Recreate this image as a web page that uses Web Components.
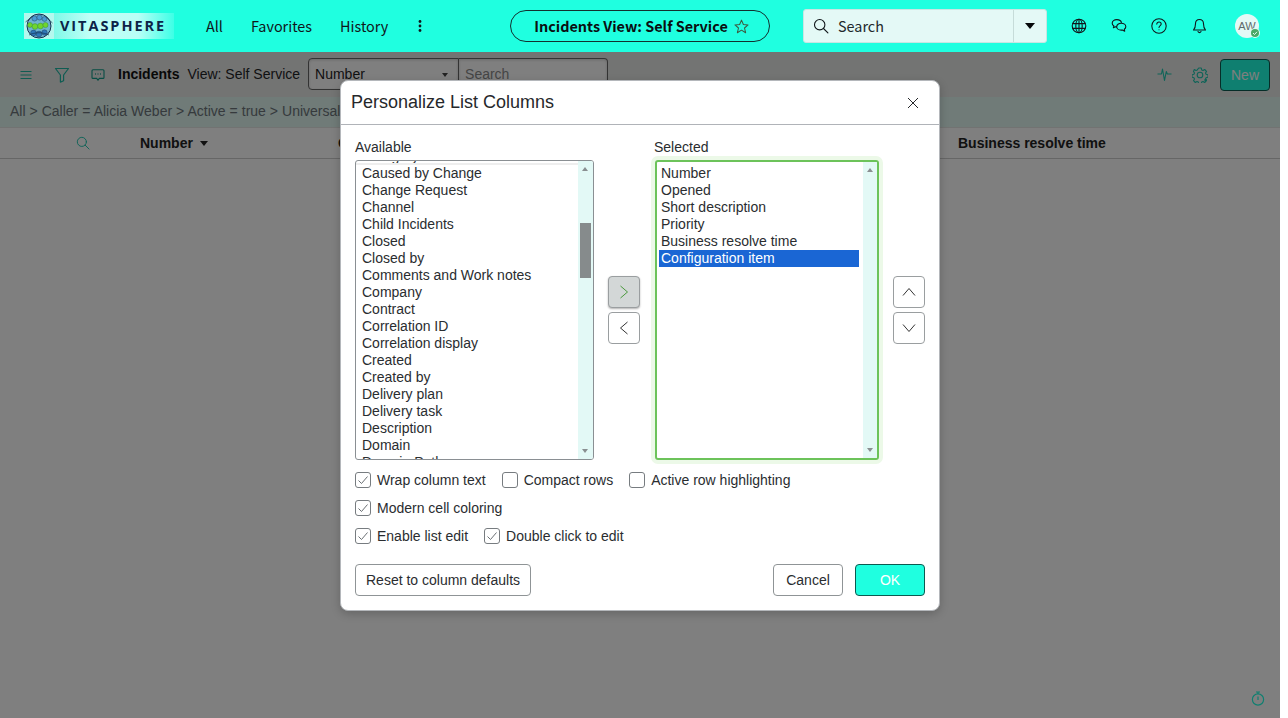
<!DOCTYPE html>
<html lang="en">
<head>
<meta charset="utf-8">
<title>Incidents View: Self Service</title>
<style>
html, body { margin: 0; height: 100%; background: #fff; overflow: hidden; }
body { font-family: "Liberation Sans", Arial, sans-serif; font-size: 14px; color: #2e2e2e; }
</style>
</head>
<body>
<app-shell></app-shell>

<script>
const icons = {
  globe: `<svg width="16" height="16" viewBox="0 0 16 16" fill="none" stroke="currentColor" stroke-width="1.1"><circle cx="8" cy="8" r="6.8"/><ellipse cx="8" cy="8" rx="3.2" ry="6.8"/><path d="M1.6 5.6h12.8M1.6 10.4h12.8M8 1.2v13.6"/></svg>`,
  chat: `<svg width="16" height="16" viewBox="0 0 16 16" fill="none" stroke="currentColor" stroke-width="1.1" stroke-linejoin="round"><path d="M6 8.900c-.5 0-1-.1-1.500-.2l-2.100 1 .5-1.700c-1-.7-1.700-1.700-1.700-2.800 0-2 2-3.600 4.600-3.600 2.400 0 4.400 1.300 4.700 3.200"/><path d="M10.200 5.300c2.500 0 4.600 1.500 4.600 3.400 0 1-.6 1.900-1.500 2.500l.4 2-2.300-1.200c-.4.1-.8.1-1.200.1-2.500 0-4.500-1.500-4.500-3.400s2-3.400 4.500-3.400z"/></svg>`,
  help: `<svg width="16" height="16" viewBox="0 0 16 16" fill="none" stroke="currentColor" stroke-width="1.05" stroke-linecap="round"><circle cx="8" cy="8" r="7.2"/><path d="M5.800 6.100c0-1.300 1-2.100 2.200-2.100s2.200.8 2.200 2c0 1.500-2.200 1.700-2.200 3.500"/><circle cx="8" cy="11.700" r=".5" fill="currentColor" stroke="none"/></svg>`,
  bell: `<svg width="15" height="16" viewBox="0 0 15 16" fill="none" stroke="currentColor" stroke-width="1.1" stroke-linejoin="round"><path d="M7.500 1.500c-2.400 0-4 1.800-4 4.200 0 3.300-.7 4.800-2 6.300h12c-1.300-1.500-2-3-2-6.300 0-2.400-1.600-4.200-4-4.200z"/><path d="M5.800 13.200c.2.900.9 1.400 1.700 1.400s1.500-.5 1.700-1.400"/></svg>`,
  search: `<svg width="16" height="16" viewBox="0 0 16 16" fill="none" stroke="currentColor" stroke-width="1.1" stroke-linecap="round"><circle cx="6.700" cy="6.700" r="5.200"/><path d="M10.500 10.500l4.400 4.400"/></svg>`,
  star: `<svg width="15" height="15" viewBox="0 0 16 16" fill="none" stroke="currentColor" stroke-width="1.100" stroke-linejoin="round"><path d="M8 1.200l2 4.700 5 .4-3.800 3.300 1.200 5L8 11.900l-4.400 2.700 1.200-5L1 6.300l5-.4z"/></svg>`,
  menu: `<svg width="14" height="14" viewBox="0 0 14 14" fill="none" stroke="currentColor" stroke-width="1.1"><path d="M1.500 3.500h11M1.500 7h11M1.500 10.500h11"/></svg>`,
  filter: `<svg width="16" height="16" viewBox="0 0 16 16" fill="none" stroke="currentColor" stroke-width="1.2" stroke-linejoin="round"><path d="M1.500 1.500h13L9.600 8v5.800l-3.200 1.300V8z"/></svg>`,
  comment: `<svg width="14" height="14" viewBox="0 0 14 14" fill="none" stroke="currentColor" stroke-width="1.100" stroke-linejoin="round"><path d="M2 1.800h10c.6 0 1 .4 1 1v6.600c0 .6-.4 1-1 1H8.300L7 12.300l-1.300-1.900H2c-.6 0-1-.4-1-1V2.800c0-.6.4-1 1-1z"/><path d="M4 6h.8M6.600 6h.8M9.200 6h.8" stroke-width="1.500"/></svg>`,
  pulse: `<svg width="15" height="15" viewBox="0 0 15 15" fill="none" stroke="currentColor" stroke-width="1.100" stroke-linejoin="round"><path d="M.5 7h4l1-5 2 11.500 1.800-9 1 2.500h4.200"/></svg>`,
  gear: `<svg width="16" height="16" viewBox="0 0 16 16" fill="none" stroke="currentColor" stroke-width="1.100" stroke-linejoin="round"><circle cx="8" cy="8" r="2.800"/><path d="M6.700 1h2.600l.4 1.900 1.300.6 1.700-1 1.800 1.900-1 1.600.6 1.300 1.900.5v2.400l-1.900.5-.6 1.300 1 1.700-1.800 1.800-1.700-1-1.300.6-.4 1.900H6.700l-.4-1.900-1.300-.6-1.700 1-1.800-1.800 1-1.700-.6-1.300-1.900-.5V7.800l1.900-.5.6-1.300-1-1.600L2.300 2.500l1.700 1 1.300-.6z"/><circle cx="13.600" cy="13" r="1.300" fill="currentColor" stroke="none"/></svg>`,
  stopwatch: `<svg width="14" height="15" viewBox="0 0 14 15" fill="none" stroke="currentColor" stroke-width="1.200"><circle cx="7" cy="8.500" r="5.600"/><path d="M5 1h4M7 1v2M7 5.500v3.500"/></svg>`,
  close: `<svg width="12" height="12" viewBox="0 0 12 12" fill="none" stroke="currentColor" stroke-width="1"><path d="M1 1l10 10M11 1L1 11"/></svg>`,
  right: `<svg width="16" height="16" viewBox="0 0 16 16" fill="none" stroke="currentColor" stroke-width="1"><path d="M4.500 2l7 6-7 6"/></svg>`,
  left: `<svg width="16" height="16" viewBox="0 0 16 16" fill="none" stroke="currentColor" stroke-width="1"><path d="M11.500 2l-7 6 7 6"/></svg>`,
  up: `<svg width="16" height="16" viewBox="0 0 16 16" fill="none" stroke="currentColor" stroke-width="1"><path d="M2 11.500l6-7 6 7"/></svg>`,
  down: `<svg width="16" height="16" viewBox="0 0 16 16" fill="none" stroke="currentColor" stroke-width="1"><path d="M2 4.500l6 7 6-7"/></svg>`
};

class BrandLogo extends HTMLElement {
  constructor() {
    super();
    this.attachShadow({ mode: "open" }).innerHTML = `
<style>
:host { display: flex; width: 150px; height: 26px; }
.globe { width: 30px; height: 26px; background: #b4f8ee; display: flex; }
.word {
  flex: 1; padding-left: 6px; display: flex; align-items: center;
  background: linear-gradient(90deg, #7ff9e8 0%, #c0fff7 30%, #b8fff6 70%, #3dffe6 100%);
  font: 700 14.500px/1 "Open Sans", sans-serif; letter-spacing: 1.950px; color: #0c2348;
}
</style>
<div class="globe">
  <svg width="30" height="26" viewBox="0 0 30 26">
    <circle cx="15" cy="13" r="12" fill="#6fb4cf" stroke="#16304f" stroke-width="1"/>
    <g fill="#4a9ad4" stroke="#16304f" stroke-width=".4"><circle cx="10.500" cy="5.500" r="2.600"/><circle cx="15.500" cy="4.500" r="2.600"/><circle cx="20.500" cy="6" r="2.400"/></g>
    <g fill="#2f78b8" stroke="#16304f" stroke-width=".4"><circle cx="9.500" cy="20" r="2.900"/><circle cx="15" cy="21" r="2.900"/><circle cx="20.500" cy="19.500" r="2.700"/></g>
    <g fill="#6fd62c" stroke="#2f7d3a" stroke-width=".4"><circle cx="6" cy="12" r="2.500"/><circle cx="11" cy="13.500" r="2.900"/><circle cx="16.500" cy="13" r="2.900"/><circle cx="21.500" cy="12" r="2.600"/></g>
    <path d="M1.500 9L9 3M21 3l7.500 7M5 22c6-3 14-3 20 0" fill="none" stroke="#16304f" stroke-width=".7"/>
  </svg>
</div>
<div class="word">VITASPHERE</div>`;
  }
}

class TopBar extends HTMLElement {
  constructor() {
    super();
    this.attachShadow({ mode: "open" }).innerHTML = `
<style>
:host {
  display: flex; align-items: center; height: 52px; padding-left: 24px; box-sizing: border-box;
  background: #1fffe0; color: #10161a; font: 14.400px "Noto Sans CJK SC", "Noto Sans", sans-serif;
  position: relative; z-index: 2;
}
nav { display: flex; gap: 28px; margin-left: 32px; width: 182px; padding-bottom: 2px; }
.kebab { width: 16px; height: 16px; margin-left: 24px; display: flex; }
.pill {
  box-sizing: border-box; width: 260px; height: 32px; margin-left: 82px;
  border: 1px solid #12302f; border-radius: 16px; padding: 0 0 2px 3px;
  display: flex; align-items: center; justify-content: center; gap: 6px;
  font-weight: 700; color: #0a0f12;
}
.pill span { display: flex; color: #3d5a40; margin-top: 2px; }
.search {
  box-sizing: border-box; width: 244px; height: 34px; margin-left: 33px;
  background: #e4f9f6; border: 1px solid #c9e6e3; border-radius: 3px;
  display: flex; align-items: center;
}
.search .glass { display: flex; margin: 0 9px 0 9px; }
.search .label { flex: 1; color: #22282b; padding-bottom: 2px; }
.search .drop {
  width: 32px; height: 100%; border-left: 1px solid #c6dcd9; display: flex; align-items: center; justify-content: center;
}
.caret { width: 0; height: 0; border-left: 5.500px solid transparent; border-right: 5.500px solid transparent; border-top: 6px solid #06090b; }
.tools { display: flex; align-items: center; margin-left: 12px; }
.tools span { width: 40px; display: flex; justify-content: center; }
.avatar {
  position: relative; box-sizing: border-box; width: 24px; height: 24px; margin-left: 16px; border-radius: 50%;
  background: #e4f9f6; color: #5e6a6c; font: 11px/24px "Liberation Sans", sans-serif; text-align: center;
}
.avatar i { position: absolute; right: 0; bottom: 1px; width: 8px; height: 8px; border-radius: 50%; background: #4aa867; box-shadow: 0 0 0 1px #e4f9f6; display: flex; }
</style>
<brand-logo></brand-logo>
<nav><span>All</span><span>Favorites</span><span>History</span></nav>
<div class="kebab"><svg width="16" height="16" viewBox="0 0 16 16" fill="#10161a"><circle cx="8" cy="3.500" r="1.400"/><circle cx="8" cy="8" r="1.400"/><circle cx="8" cy="12.500" r="1.400"/></svg></div>
<div class="pill">Incidents View: Self Service <span>${icons.star}</span></div>
<div class="search">
  <span class="glass">${icons.search}</span><span class="label">Search</span>
  <span class="drop"><span class="caret"></span></span>
</div>
<div class="tools">
  <span>${icons.globe}</span><span>${icons.chat}</span><span>${icons.help}</span><span>${icons.bell}</span>
</div>
<div class="avatar">AW<i><svg width="8" height="8" viewBox="0 0 8 8" fill="none" stroke="#e4f9f6" stroke-width="1"><path d="M2 4l1.500 1.500L6 2.800"/></svg></i></div>`;
  }
}

class ListToolbar extends HTMLElement {
  constructor() {
    super();
    this.attachShadow({ mode: "open" }).innerHTML = `
<style>
:host {
  display: flex; align-items: center; height: 45px; padding: 0 10px 2px 19px; box-sizing: border-box;
  background: #e6e8e7; color: #1f2426;
}
.ico { display: flex; color: #1fb8a4; margin-top: 2px; }
.filter { margin-left: 21px; }
.comment { margin-left: 21px; color: #109a88; }
b { margin-left: 13px; color: #111; }
.view { margin-left: 8px; }
.field { display: flex; margin-left: 8px; }
.sel, .inp {
  box-sizing: border-box; height: 32px; border: 1px solid #666; padding: 0 6px; line-height: 30px; background: #fff;
  box-shadow: inset 0 1px 3px rgba(0,0,0,.18);
}
.sel { width: 151px; border-radius: 4px 0 0 4px; display: flex; justify-content: space-between; align-items: center; padding-right: 10px; }
.sel i { width: 0; height: 0; border-left: 3.500px solid transparent; border-right: 3.500px solid transparent; border-top: 4px solid #444; margin-top: 3px; }
.inp { width: 149px; border-left: 0; border-radius: 0 4px 4px 0; color: #8a8a8a; }
.right { margin-left: auto; display: flex; align-items: center; }
.pulse { margin-right: 20px; color: #1fc8b0; }
.gear { margin-right: 12px; color: #1fc8b0; }
.new {
  box-sizing: border-box; width: 50px; height: 32px; border: 1px solid #0c5a50; border-radius: 4px; background: #1fffe0; color: #fff;
  text-align: center; line-height: 30px; margin-top: 2px;
}
</style>
<span class="ico">${icons.menu}</span>
<span class="ico filter">${icons.filter}</span>
<span class="ico comment">${icons.comment}</span>
<b>Incidents</b><span class="view">View: Self Service</span>
<div class="field"><div class="sel">Number<i></i></div><div class="inp">Search</div></div>
<div class="right">
  <span class="ico pulse">${icons.pulse}</span>
  <span class="ico gear">${icons.gear}</span>
  <div class="new">New</div>
</div>`;
  }
}

class CrumbBar extends HTMLElement {
  constructor() {
    super();
    this.attachShadow({ mode: "open" }).innerHTML = `
<style>
:host {
  display: flex; align-items: center; height: 30px; padding: 0 0 2px 10px; box-sizing: border-box;
  background: #e0f6f0; color: #6c747a; white-space: pre; word-spacing: .1px;
}
</style>
<slot></slot>`;
  }
}

class ColumnHeader extends HTMLElement {
  constructor() {
    super();
    this.attachShadow({ mode: "open" }).innerHTML = `
<style>
:host {
  display: flex; align-items: center; height: 32px; box-sizing: border-box; padding-left: 76px;
  background: #fefefe; border-top: 1px solid #e4e6e5; border-bottom: 1px solid #ccc;
  font-weight: 700; color: #222;
}
.glass { display: flex; color: #1fc8b0; width: 64px; }
.num { width: 198px; display: flex; align-items: center; gap: 7px; }
.num i { width: 0; height: 0; border-left: 4.500px solid transparent; border-right: 4.500px solid transparent; border-top: 5px solid #222; }
.opened { width: 620px; }
.glass svg { width: 14px; height: 14px; }
</style>
<span class="glass">${icons.search}</span>
<span class="num">Number <i></i></span>
<span class="opened">Opened</span>
<span>Business resolve time</span>`;
  }
}

class ColumnList extends HTMLElement {
  constructor() {
    super();
    this.attachShadow({ mode: "open" }).innerHTML = `
<style>
:host { display: block; box-sizing: border-box; height: 300px; position: relative; }
.box {
  box-sizing: border-box; height: 100%; display: flex; background: #fff; overflow: hidden;
  border: 1px solid #8a8f93; border-radius: 3px;
}
:host([focused]) .box { border: 2px solid #6cc35a; }
:host([focused]) { box-shadow: 0 0 0 4px #ecf9e8; border-radius: 3px; }
.rows { flex: 1; overflow: hidden; padding: 2px 4px 0 3px; line-height: 17px; color: #2a2d30; position: relative; }
:host([focused]) .rows { padding: 3px 4px 0 2px; }
.row { padding-left: 3px; height: 17px; white-space: nowrap; }
:host([focused]) .row { padding-left: 2px; }
.row.on { background: #1a66d4; color: #fff; }
.bar { width: 15px; background: #e3f9f6; position: relative; }
:host([focused]) .bar { width: 14px; }
.bar i { position: absolute; left: 50%; margin-left: -3.500px; width: 0; height: 0; border-left: 3.500px solid transparent; border-right: 3.500px solid transparent; }
.bar .a { top: 6px; border-bottom: 4px solid #8a8f91; }
.bar .b { bottom: 6px; border-top: 4px solid #8a8f91; }
.thumb { position: absolute; left: 2px; right: 2px; background: #868b8c; }
.veil { position: absolute; left: 0; right: 0; top: 2px; height: 2px; background: #eeeeee; }
</style>
<div class="box">
  <div class="rows"></div>
  <div class="bar"><i class="a"></i><i class="b"></i></div>
</div>`;
  }
  connectedCallback() {
    const rows = this.shadowRoot.querySelector(".rows");
    const items = this.getAttribute("items").split("|");
    const picked = this.getAttribute("picked");
    const inner = document.createElement("div");
    const shift = this.getAttribute("shift");
    if (shift) inner.style.marginTop = shift + "px";
    for (const item of items) {
      const row = document.createElement("div");
      row.className = item === picked ? "row on" : "row";
      row.textContent = item;
      inner.appendChild(row);
    }
    rows.appendChild(inner);
    const top = this.getAttribute("thumb-top");
    if (top) {
      const thumb = document.createElement("div");
      thumb.className = "thumb";
      thumb.style.top = top + "px";
      thumb.style.height = this.getAttribute("thumb-height") + "px";
      this.shadowRoot.querySelector(".bar").appendChild(thumb);
      const veil = document.createElement("div");
      veil.className = "veil";
      rows.appendChild(veil);
    }
  }
}

class MoveButton extends HTMLElement {
  constructor() {
    super();
    this.attachShadow({ mode: "open" }).innerHTML = `
<style>
:host {
  display: flex; align-items: center; justify-content: center; box-sizing: border-box; width: 32px; height: 32px;
  border: 1px solid #9a9ea0; border-radius: 4px; color: #333; background: #fff;
}
:host([active]) { background: #d3d7d7; color: #4a9a3c; box-shadow: 0 1px 2px rgba(0,0,0,.3); }
</style>
<span style="display:flex">${icons[this.getAttribute("icon")]}</span>`;
  }
}

class CheckOption extends HTMLElement {
  constructor() {
    super();
    this.attachShadow({ mode: "open" }).innerHTML = `
<style>
:host { display: flex; align-items: center; gap: 6px; height: 16px; }
.box {
  box-sizing: border-box; width: 16px; height: 16px; border: 1px solid #777c80; border-radius: 3px; background: #fff; display: flex;
}
svg { display: none; }
:host([checked]) svg { display: block; }
</style>
<span class="box"><svg width="14" height="14" viewBox="0 0 14 14" fill="none" stroke="#5a6064" stroke-width=".9"><path d="M2.500 7.500l3 3 6-7"/></svg></span>
<slot></slot>`;
  }
}

class ActionButton extends HTMLElement {
  constructor() {
    super();
    this.attachShadow({ mode: "open" }).innerHTML = `
<style>
:host {
  display: block; box-sizing: border-box; height: 32px; padding: 0 10px; line-height: 30px; text-align: center;
  border: 1px solid #8f9496; border-radius: 4px; color: #2a2d30; background: #fff;
}
:host([primary]) { background: #1fffe0; border-color: #0c5a50; color: #fff; }
</style>
<slot></slot>`;
  }
}

class MoveStack extends HTMLElement {
  constructor() {
    super();
    this.attachShadow({ mode: "open" }).innerHTML = `
<style>:host { display: flex; flex-direction: column; gap: 4px; }</style>
<slot></slot>`;
  }
}

class PersonalizeModal extends HTMLElement {
  constructor() {
    super();
    this.attachShadow({ mode: "open" }).innerHTML = `
<style>
:host {
  display: block; box-sizing: border-box; width: 600px; height: 531px; background: #fff;
  border: 1px solid #b4b7bb; border-radius: 8px; box-shadow: 0 3px 10px rgba(0,0,0,.2);
  color: #2a2d30;
}
header {
  display: flex; align-items: center; justify-content: space-between; height: 44px; padding: 0 20px 0 10px; box-sizing: border-box;
  border-bottom: 1px solid #b0b3b8; font-size: 18px; color: #26282b;
}
header span { display: flex; }
.body { padding: 14px; }
.lists { display: grid; grid-template-columns: 239px 32px 224px 32px; column-gap: 14px; align-items: center; }
.col { display: flex; flex-direction: column; gap: 5px; }
.col label { line-height: 16px; }
.sel-col { margin-left: 1px; margin-right: -1px; }
.sel-col label { margin-left: -1px; }
.stack { margin-top: 21px; }
.stack.r { margin-left: 1px; }
.opts { display: flex; flex-direction: column; gap: 12px; margin-top: 12px; }
.opts div { display: flex; gap: 16px; }
footer { display: flex; justify-content: space-between; margin-top: 20px; }
footer div { display: flex; gap: 12px; }
.ok { width: 70px; }
</style>
<header>Personalize List Columns <span>${icons.close}</span></header>
<div class="body">
  <div class="lists">
    <div class="col">
      <label>Available</label>
      <column-list shift="-15" thumb-top="62" thumb-height="55"
        items="Category|Caused by Change|Change Request|Channel|Child Incidents|Closed|Closed by|Comments and Work notes|Company|Contract|Correlation ID|Correlation display|Created|Created by|Delivery plan|Delivery task|Description|Domain|Domain Path"></column-list>
    </div>
    <move-stack class="stack"><move-button icon="right" active></move-button><move-button icon="left"></move-button></move-stack>
    <div class="col sel-col">
      <label>Selected</label>
      <column-list focused picked="Configuration item"
        items="Number|Opened|Short description|Priority|Business resolve time|Configuration item"></column-list>
    </div>
    <move-stack class="stack r"><move-button icon="up"></move-button><move-button icon="down"></move-button></move-stack>
  </div>
  <div class="opts">
    <div><check-option checked>Wrap column text</check-option><check-option>Compact rows</check-option><check-option>Active row highlighting</check-option></div>
    <div><check-option checked>Modern cell coloring</check-option></div>
    <div><check-option checked>Enable list edit</check-option><check-option checked>Double click to edit</check-option></div>
  </div>
  <footer>
    <action-button>Reset to column defaults</action-button>
    <div><action-button class="ok">Cancel</action-button><action-button class="ok" primary>OK</action-button></div>
  </footer>
</div>`;
  }
}

class AppShell extends HTMLElement {
  constructor() {
    super();
    this.attachShadow({ mode: "open" }).innerHTML = `
<style>
:host { display: flex; flex-direction: column; width: 1280px; height: 718px; position: relative; }
main { flex: 1; display: flex; flex-direction: column; background: #fff; position: relative; }
.empty { flex: 1; display: flex; justify-content: flex-end; align-items: flex-end; padding: 0 15px 12px 0; color: #1fffe0; }
.empty span { display: flex; }
.backdrop {
  position: absolute; inset: 0; background: rgba(0,0,0,.5);
  display: flex; justify-content: center; align-items: flex-start; padding-top: 28px;
}
</style>
<top-bar></top-bar>
<main>
  <list-toolbar></list-toolbar>
  <crumb-bar>All &gt; Caller = Alicia Weber &gt; Active = true &gt; Universal Request is empty</crumb-bar>
  <column-header></column-header>
  <div class="empty"><span>${icons.stopwatch}</span></div>
  <div class="backdrop"><personalize-modal></personalize-modal></div>
</main>`;
  }
}

customElements.define("brand-logo", BrandLogo);
customElements.define("top-bar", TopBar);
customElements.define("list-toolbar", ListToolbar);
customElements.define("crumb-bar", CrumbBar);
customElements.define("column-header", ColumnHeader);
customElements.define("column-list", ColumnList);
customElements.define("move-button", MoveButton);
customElements.define("move-stack", MoveStack);
customElements.define("check-option", CheckOption);
customElements.define("action-button", ActionButton);
customElements.define("personalize-modal", PersonalizeModal);
customElements.define("app-shell", AppShell);
</script>
</body>
</html>
